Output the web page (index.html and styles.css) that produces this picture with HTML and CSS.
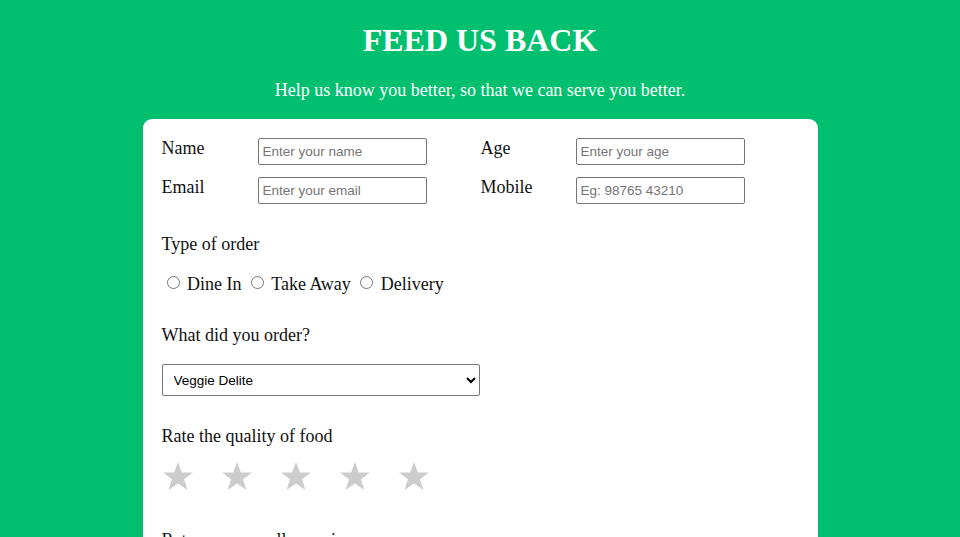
FILE: index.html
```html
<!DOCTYPE html>
<html>
<head>
<meta charset="utf-8">
<title>Feed Us Back</title>
<link rel="stylesheet" href="styles.css">
</head>
<body>
<header class="hero">
  <h1 class="title">FEED US BACK</h1>
  <p class="subtitle">Help us know you better, so that we can serve you better.</p>
</header>
<main class="card">
  <div class="details">
    <label class="field-label" for="name">Name</label>
    <input class="text-input" id="name" type="text" placeholder="Enter your name">
    <label class="field-label" for="age">Age</label>
    <input class="text-input" id="age" type="text" placeholder="Enter your age">
    <label class="field-label" for="email">Email</label>
    <input class="text-input" id="email" type="text" placeholder="Enter your email">
    <label class="field-label" for="mobile">Mobile</label>
    <input class="text-input" id="mobile" type="text" placeholder="Eg: 98765 43210">
  </div>

  <section class="section section-type">
    <div class="section-label">Type of order</div>
    <div class="radios">
      <label class="radio"><input type="radio" name="type"> Dine In</label>
      <label class="radio"><input type="radio" name="type"> Take Away</label>
      <label class="radio"><input type="radio" name="type"> Delivery</label>
    </div>
  </section>

  <section class="section section-order">
    <div class="section-label">What did you order?</div>
    <select class="select">
      <option>Veggie Delite</option>
      <option>Paneer Tikka</option>
      <option>Chicken Teriyaki</option>
    </select>
  </section>

  <section class="section section-rate">
    <div class="section-label">Rate the quality of food</div>
    <div class="stars">
      <svg class="star" viewBox="0 0 32 31"><path d="M16 1l3.9 10.6H31l-9 6.6 3.4 10.8L16 22.5 6.6 29l3.4-10.8-9-6.6h11.1z"/></svg>
      <svg class="star" viewBox="0 0 32 31"><path d="M16 1l3.9 10.6H31l-9 6.6 3.4 10.8L16 22.5 6.6 29l3.4-10.8-9-6.6h11.1z"/></svg>
      <svg class="star" viewBox="0 0 32 31"><path d="M16 1l3.9 10.6H31l-9 6.6 3.4 10.8L16 22.5 6.6 29l3.4-10.8-9-6.6h11.1z"/></svg>
      <svg class="star" viewBox="0 0 32 31"><path d="M16 1l3.9 10.6H31l-9 6.6 3.4 10.8L16 22.5 6.6 29l3.4-10.8-9-6.6h11.1z"/></svg>
      <svg class="star" viewBox="0 0 32 31"><path d="M16 1l3.9 10.6H31l-9 6.6 3.4 10.8L16 22.5 6.6 29l3.4-10.8-9-6.6h11.1z"/></svg>
    </div>
  </section>

  <section class="section section-rate2">
    <div class="section-label">Rate your overall experience</div>
    <div class="stars">
      <svg class="star" viewBox="0 0 32 31"><path d="M16 1l3.9 10.6H31l-9 6.6 3.4 10.8L16 22.5 6.6 29l3.4-10.8-9-6.6h11.1z"/></svg>
      <svg class="star" viewBox="0 0 32 31"><path d="M16 1l3.9 10.6H31l-9 6.6 3.4 10.8L16 22.5 6.6 29l3.4-10.8-9-6.6h11.1z"/></svg>
      <svg class="star" viewBox="0 0 32 31"><path d="M16 1l3.9 10.6H31l-9 6.6 3.4 10.8L16 22.5 6.6 29l3.4-10.8-9-6.6h11.1z"/></svg>
      <svg class="star" viewBox="0 0 32 31"><path d="M16 1l3.9 10.6H31l-9 6.6 3.4 10.8L16 22.5 6.6 29l3.4-10.8-9-6.6h11.1z"/></svg>
      <svg class="star" viewBox="0 0 32 31"><path d="M16 1l3.9 10.6H31l-9 6.6 3.4 10.8L16 22.5 6.6 29l3.4-10.8-9-6.6h11.1z"/></svg>
    </div>
  </section>
</main>
</body>
</html>
```

FILE: styles.css
```css
html, body {
  margin: 0;
  padding: 0;
}

body {
  background: #00bf6f;
  font-family: "Liberation Serif", "Times New Roman", serif;
  color: #111;
}

.hero {
  text-align: center;
  color: #fff;
}

.title {
  margin: 0;
  padding-top: 22px;
  font-size: 32px;
  font-weight: bold;
  line-height: 37px;
}

.subtitle {
  margin: 21px 0 0;
  font-size: 18px;
  line-height: 21px;
  padding-bottom: 18px;
}

.card {
  width: 637px;
  margin: 0 auto;
  background: #fff;
  border-radius: 9px;
  padding: 19px 19px 40px;
  min-height: 600px;
}

.details {
  display: grid;
  grid-template-columns: 96px 223px 95px 169px;
  grid-auto-rows: 27px;
  row-gap: 12px;
  align-items: start;
}

.field-label {
  font-size: 18px;
  line-height: 21px;
}

.text-input {
  box-sizing: border-box;
  width: 169px;
  height: 27px;
  margin: 0;
  border: 1px solid #767676;
  border-radius: 2px;
  padding: 0 4px;
  font-family: "Liberation Sans", Arial, sans-serif;
  font-size: 13.5px;
  color: #222;
}

.text-input::placeholder {
  color: #757575;
}

.section-label {
  font-size: 18px;
  line-height: 21px;
}

.section-type {
  margin-top: 30px;
}

.radios {
  margin-top: 18px;
  font-size: 18px;
  line-height: 21px;
}

.radio input {
  margin: 3px 3px 0 5px;
  vertical-align: 1px;
}

.section-order {
  margin-top: 30px;
}

.select {
  margin-top: 18px;
  display: block;
  width: 318px;
  height: 32px;
  border: 1px solid #767676;
  border-radius: 2px;
  padding: 0 7px;
  background: #fff;
  font-family: "Liberation Sans", Arial, sans-serif;
  font-size: 13.5px;
  color: #000;
}

.section-rate {
  margin-top: 30px;
}

.stars {
  margin-top: 14px;
  display: flex;
  gap: 27px;
}

.star {
  width: 32px;
  height: 31px;
  fill: #cccccc;
}

.section-rate2 {
  margin-top: 38px;
}
```
